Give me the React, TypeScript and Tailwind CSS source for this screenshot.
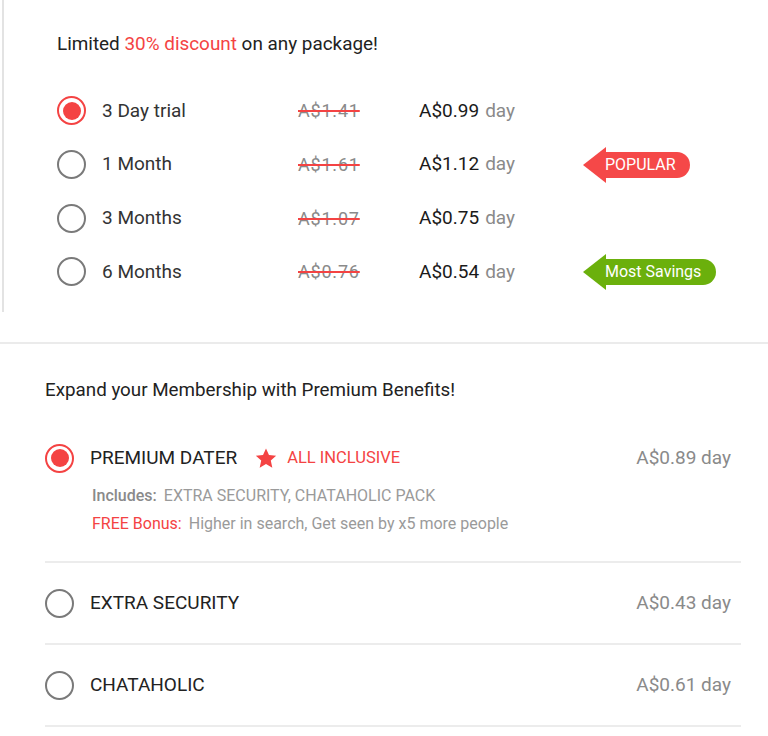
import { useState } from 'react';

type Plan = {
    id: string;
    label: string;
    oldPrice: string;
    price: string;
    badge?: 'popular' | 'savings';
};

const plans: Plan[] = [
    { id: 'trial', label: '3 Day trial', oldPrice: 'A$1.41', price: 'A$0.99' },
    { id: '1m', label: '1 Month', oldPrice: 'A$1.61', price: 'A$1.12', badge: 'popular' },
    { id: '3m', label: '3 Months', oldPrice: 'A$1.07', price: 'A$0.75' },
    { id: '6m', label: '6 Months', oldPrice: 'A$0.76', price: 'A$0.54', badge: 'savings' },
];

function Radio({ checked }: { checked: boolean }) {
    if (checked) {
        return (
            <span className="flex h-[29px] w-[29px] shrink-0 items-center justify-center rounded-full border-[2.5px] border-[#f44343]">
                <span className="h-[18px] w-[18px] rounded-full bg-[#f44343]" />
            </span>
        );
    }
    return <span className="block h-[29px] w-[29px] shrink-0 rounded-full border-[2.5px] border-[#7a7a7a]" />;
}

function ArrowBadge({ text, color }: { text: string; color: 'red' | 'green' }) {
    const fill = color === 'red' ? '#f54848' : '#6bb00c';
    return (
        <div className="flex items-center">
            <svg width="23" height="36" viewBox="0 0 23 36" className="shrink-0">
                <path d="M0 18 L23 0 L23 36 Z" fill={fill} />
            </svg>
            <span
                className={
                    color === 'red'
                        ? 'flex h-[26px] items-center rounded-r-full bg-[#f54848] pr-[14px] -ml-px text-[16px] text-white'
                        : 'flex h-[26px] items-center rounded-r-full bg-[#6bb00c] pr-[15px] -ml-px text-[16px] text-white'
                }
            >
                {text}
            </span>
        </div>
    );
}

function PlanRow({ plan, selected, onSelect }: { plan: Plan; selected: boolean; onSelect: () => void }) {
    return (
        <div className="flex h-[53.7px] cursor-pointer items-center" onClick={onSelect}>
            <Radio checked={selected} />
            <span className="ml-[16px] w-[196px] text-[19px] text-[#333]">{plan.label}</span>
            <span className="w-[121px] text-[18px] tracking-[0.8px] text-[#8a8a8a] line-through decoration-[#f44343] decoration-2">
                {plan.oldPrice}
            </span>
            <span className="w-[164px] text-[19px]">
                <span className="text-[#1a1a1a]">{plan.price}</span>
                <span className="ml-[6px] text-[#8a8a8a]">day</span>
            </span>
            {plan.badge === 'popular' && <ArrowBadge text="POPULAR" color="red" />}
            {plan.badge === 'savings' && <ArrowBadge text="Most Savings" color="green" />}
        </div>
    );
}

function AddonRow({ title, price, selected }: { title: string; price: string; selected: boolean }) {
    return (
        <div className="flex h-[82px] items-center border-b-2 border-[#ececec]">
            <Radio checked={selected} />
            <span className="ml-[16px] flex-1 text-[19px] text-[#222]">{title}</span>
            <span className="mr-[10px] text-[19px] text-[#8a8a8a]">{price}</span>
        </div>
    );
}

export default function App() {
    const [plan, setPlan] = useState('trial');

    return (
        <div className="min-h-screen bg-white font-['Roboto',sans-serif]">
            {/* packages */}
            <div className="ml-[2px] h-[312px] border-l-2 border-[#e3e3e3] pl-[53px] pt-[33px]">
                <h2 className="text-[18.9px] leading-[22px] text-[#222]">
                    Limited <span className="text-[#f44343]">30% discount</span> on any package!
                </h2>
                <div className="mt-[29px]">
                    {plans.map((p) => (
                        <PlanRow key={p.id} plan={p} selected={plan === p.id} onSelect={() => setPlan(p.id)} />
                    ))}
                </div>
            </div>

            <div className="mt-[30px] h-[2px] bg-[#ebebeb]" />

            {/* premium benefits */}
            <div className="pl-[45px] pr-[27px] pt-[34px]">
                <h2 className="text-[18.8px] leading-[24px] text-[#222]">Expand your Membership with Premium Benefits!</h2>

                <div className="mt-[41px] border-b-2 border-[#ececec] pb-[23px]">
                    <div className="flex h-[30px] items-center">
                        <Radio checked={true} />
                        <span className="ml-[16px] text-[19px] text-[#222]">PREMIUM DATER</span>
                        <svg width="24" height="23" viewBox="0 0 24 24" className="ml-[17px]">
                            <path
                                d="M12 1.5 L15.1 8.4 L22.6 9.2 L17 14.2 L18.6 21.6 L12 17.8 L5.4 21.6 L7 14.2 L1.4 9.2 L8.9 8.4 Z"
                                fill="#f44343"
                            />
                        </svg>
                        <span className="ml-[9px] flex-1 text-[16.5px] text-[#f44343]">ALL INCLUSIVE</span>
                        <span className="mr-[10px] text-[19px] text-[#8a8a8a]">A$0.89 day</span>
                    </div>
                    <div className="ml-[47px] mt-[9px] text-[16px] leading-[28px]">
                        <p>
                            <span className="font-medium text-[#8a8a8a]">Includes:</span>
                            <span className="ml-[7px] text-[#9a9a9a]">EXTRA SECURITY, CHATAHOLIC PACK</span>
                        </p>
                        <p>
                            <span className="text-[#f44343]">FREE Bonus:</span>
                            <span className="ml-[7px] text-[#9a9a9a]">Higher in search, Get seen by x5 more people</span>
                        </p>
                    </div>
                </div>

                <AddonRow title="EXTRA SECURITY" price="A$0.43 day" selected={false} />
                <AddonRow title="CHATAHOLIC" price="A$0.61 day" selected={false} />
            </div>
        </div>
    );
}
